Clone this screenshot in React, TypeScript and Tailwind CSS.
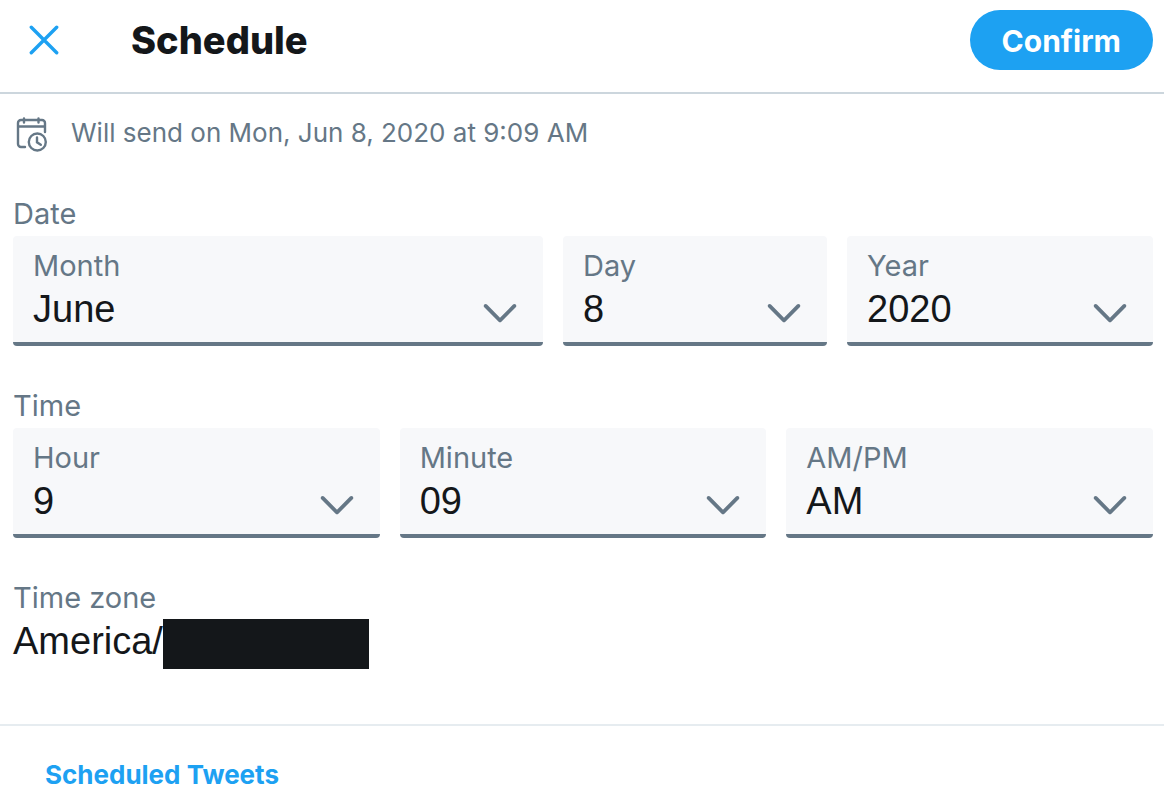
import { useState } from 'react';

interface FieldProps {
  id: string;
  label: string;
  value: string;
  options: string[];
  onChange: (value: string) => void;
}

const MONTHS = [
  'January', 'February', 'March', 'April', 'May', 'June',
  'July', 'August', 'September', 'October', 'November', 'December',
];
const DAYS = Array.from({ length: 31 }, (_, i) => String(i + 1));
const YEARS = ['2020', '2021'];
const HOURS = Array.from({ length: 12 }, (_, i) => String(i + 1));
const MINUTES = Array.from({ length: 60 }, (_, i) => String(i).padStart(2, '0'));

function CloseIcon() {
  return (
    <svg viewBox="0 0 30 30" className="h-[30px] w-[30px]" fill="none" stroke="currentColor" strokeWidth="3.4" strokeLinecap="round" aria-hidden="true">
      <path d="M2.3 2.3l25.4 25.4M27.7 2.3l-25.4 25.4" />
    </svg>
  );
}

function ScheduleIcon() {
  return (
    <svg viewBox="0 0 32 36" className="h-9 w-8 shrink-0" fill="none" stroke="currentColor" strokeWidth="2.4" strokeLinecap="round" aria-hidden="true">
      <path d="M10 31H6a3 3 0 0 1-3-3V7a3 3 0 0 1 3-3h21a3 3 0 0 1 3 3v9M3 10.500h27M9 2.500v4M23.500 2.500v4" />
      <circle cx="22.300" cy="26" r="8.500" />
      <path d="M22 21.500v4.800l3.800 2.500" />
    </svg>
  );
}

function ChevronIcon() {
  return (
    <svg viewBox="0 0 24 24" className="pointer-events-none absolute right-5 bottom-[7px] h-[46px] w-[46px] text-[#657786]" fill="currentColor" aria-hidden="true">
      <path d="M20.207 8.147c-.39-.39-1.023-.39-1.414 0L12 14.94 5.207 8.147c-.39-.39-1.023-.39-1.414 0-.39.39-.39 1.023 0 1.414l7.5 7.5c.195.196.45.294.707.294s.512-.098.707-.293l7.5-7.5c.39-.39.39-1.022 0-1.413z" />
    </svg>
  );
}

function SelectField({ id, label, value, options, onChange }: FieldProps) {
  return (
    <div className="relative rounded border-b-4 border-[#657786] bg-[#f7f8fa] px-5 pt-2.5 pb-2.5">
      <label htmlFor={id} className="block text-[29px] leading-10 text-[#657786]">
        {label}
      </label>
      <select
        id={id}
        value={value}
        onChange={(e) => onChange(e.target.value)}
        className="block h-[46px] w-full appearance-none bg-transparent font-['Liberation_Sans',Arial,sans-serif] text-[38px] leading-[46px] text-[#14171a] outline-none"
      >
        {options.map((option) => (
          <option key={option}>{option}</option>
        ))}
      </select>
      <ChevronIcon />
    </div>
  );
}

export default function App() {
  const [month, setMonth] = useState('June');
  const [day, setDay] = useState('8');
  const [year, setYear] = useState('2020');
  const [hour, setHour] = useState('9');
  const [minute, setMinute] = useState('09');
  const [period, setPeriod] = useState('AM');

  return (
    <div className="bg-white font-['Inter',sans-serif] text-[#14171a]">
      {/* Header */}
      <header className="flex items-center border-b-2 border-[#ccd6dd] pt-2.5 pr-[11px] pb-[22px] pl-[29px]">
        <button type="button" aria-label="Close" className="text-[#1da1f2]">
          <CloseIcon />
        </button>
        <h1 className="ml-[72px] text-[38px] leading-[60px] font-extrabold">Schedule</h1>
        <button type="button" className="ml-auto h-[60px] rounded-full bg-[#1da1f2] px-8 pt-0.5 text-[30px] font-bold text-white">
          Confirm
        </button>
      </header>

      <main className="pr-[11px] pl-[13px]">
        <div className="flex items-end gap-6 pt-5 pl-0.5 text-[#657786]">
          <ScheduleIcon />
          <p className="text-[26px] leading-[38px]">
            Will send on Mon, Jun 8, 2020 at 9:09 AM
          </p>
        </div>

        {/* Date */}
        <fieldset className="pt-[42px]">
          <legend className="contents text-[29px] text-[#657786]">
            <span className="block pb-0.5 leading-10">Date</span>
          </legend>
          <div className="grid grid-cols-[530fr_264fr_306fr] gap-5">
            <SelectField id="month" label="Month" value={month} options={MONTHS} onChange={setMonth} />
            <SelectField id="day" label="Day" value={day} options={DAYS} onChange={setDay} />
            <SelectField id="year" label="Year" value={year} options={YEARS} onChange={setYear} />
          </div>
        </fieldset>

        {/* Time */}
        <fieldset className="pt-10">
          <legend className="contents text-[29px] text-[#657786]">
            <span className="block pb-0.5 leading-10">Time</span>
          </legend>
          <div className="grid grid-cols-3 gap-5">
            <SelectField id="hour" label="Hour" value={hour} options={HOURS} onChange={setHour} />
            <SelectField id="minute" label="Minute" value={minute} options={MINUTES} onChange={setMinute} />
            <SelectField id="period" label="AM/PM" value={period} options={['AM', 'PM']} onChange={setPeriod} />
          </div>
        </fieldset>

        {/* Time zone */}
        <section className="pt-10 pb-[55px]">
          <h2 className="text-[29px] leading-10 text-[#657786]">Time zone</h2>
          <div className="flex items-start pt-px">
            <span className="font-['Liberation_Sans',Arial,sans-serif] text-[38px] leading-[44px]">America/</span>
            <span className="h-[50px] w-[206px] bg-[#14171a]" />
          </div>
        </section>
      </main>

      <footer className="border-t-2 border-[#e6ecf0] px-[45px] pt-[29px]">
        <a href="#scheduled" className="text-[26px] leading-10 font-bold text-[#1da1f2]">
          Scheduled Tweets
        </a>
      </footer>
    </div>
  );
}
